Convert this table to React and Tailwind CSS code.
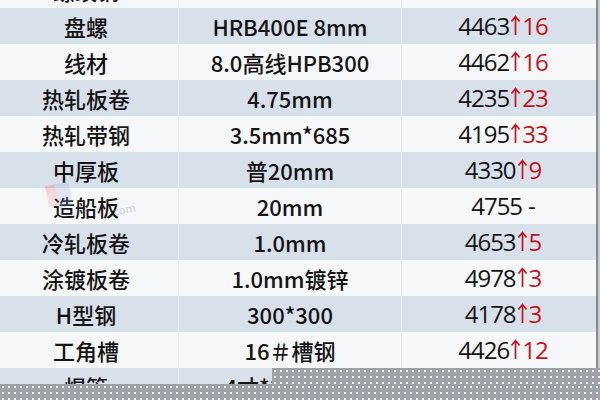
import React from 'react';

const rows = [
    {name: '螺纹钢', spec: 'HRB400E 20mm', price: '4123', change: '16'},
    {name: '盘螺', spec: 'HRB400E 8mm', price: '4463', change: '16'},
    {name: '线材', spec: '8.0高线HPB300', price: '4462', change: '16'},
    {name: '热轧板卷', spec: '4.75mm', price: '4235', change: '23'},
    {name: '热轧带钢', spec: '3.5mm*685', price: '4195', change: '33'},
    {name: '中厚板', spec: '普20mm', price: '4330', change: '9'},
    {name: '造船板', spec: '20mm', price: '4755', change: null},
    {name: '冷轧板卷', spec: '1.0mm', price: '4653', change: '5'},
    {name: '涂镀板卷', spec: '1.0mm镀锌', price: '4978', change: '3'},
    {name: 'H型钢', spec: '300*300', price: '4178', change: '3'},
    {name: '工角槽', spec: '16＃槽钢', price: '4426', change: '12'},
    {name: '焊管', spec: '4寸*3.75mm', price: '4512', change: '10'},
];

const UpArrow = () => (
    <svg width="11" height="21" viewBox="0 0 11 21" className="mx-[1px] mb-[1px]">
        <path d="M5.5 20V2M1.5 6.5L5.5 1.5 9.5 6.5" fill="none" stroke="#c3141c" strokeWidth="1.7" />
    </svg>
);

const Row = ({row, index}) => {
    const shade = index % 2 === 1 ? 'bg-[#d8e0ea]' : 'bg-[#f6f7f9]';
    return (
        <div className={'flex h-[36px] items-center text-[#141414] ' + shade}>
            <div className="flex h-full w-[178px] items-center justify-center pr-[6px]">{row.name}</div>
            <div className="flex h-full w-[224px] items-center justify-center border-x border-[#e8ebef]">
                {row.spec}
            </div>
            <div className="flex h-full flex-1 items-center justify-center pl-[8px] font-['Open_Sans',sans-serif] text-[24px] font-normal tracking-[-1px]">
                <span>{row.price}</span>
                {row.change ? (
                    <span className="flex items-center text-[#c3141c]">
                        <UpArrow />
                        {row.change}
                    </span>
                ) : (
                    <span className="ml-[6px]">-</span>
                )}
            </div>
        </div>
    );
};

const App = () => {
    return (
        <div className="relative h-[400px] w-[600px] overflow-hidden bg-[#a4a8ad] font-['Noto_Sans_CJK_SC','Noto_Sans',sans-serif] text-[22px] font-medium">
            <div className="flex">
                <div className="-mt-[28px] w-[596px]">
                    {rows.map((row, i) => (
                        <Row key={row.name} row={row} index={i} />
                    ))}
                </div>
                <div className="w-[2px] bg-[#868b92]" />
                <div className="flex-1 bg-[#c9ccd0]" />
            </div>

            {/* faint watermark over the 造船板 row */}
            <div className="pointer-events-none absolute left-[47px] top-[183px] flex items-end opacity-25">
                <div className="h-[22px] w-[12px] -rotate-12 bg-gradient-to-b from-[#e05a5a] to-[#f0b0b0]" />
                <div className="-ml-[2px] h-[24px] w-[14px] -rotate-12 bg-[#9fb0d8]" />
            </div>
            <div className="pointer-events-none absolute left-[110px] top-[204px] -rotate-12 text-[11px] leading-none text-[#8f9cc0] opacity-40">
                .com
            </div>

            {/* screen-door overlay at the bottom */}
            <div className="absolute left-[272px] right-0 top-[368px] h-[32px] bg-[#9ea3a9] bg-[radial-gradient(circle,#f4f4f4_0.9px,transparent_1.2px)] bg-[length:6px_6px]" />
            <div className="absolute left-0 right-0 top-[384px] h-[16px] bg-[#9ea3a9] bg-[radial-gradient(circle,#f4f4f4_0.9px,transparent_1.2px)] bg-[length:6px_6px]" />
        </div>
    );
};

export default App;
